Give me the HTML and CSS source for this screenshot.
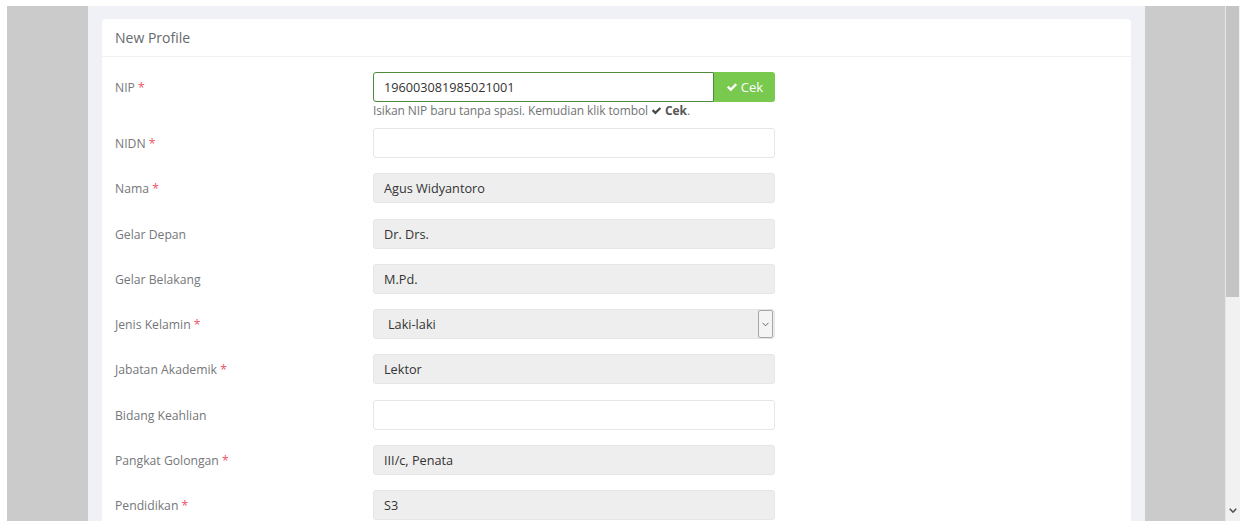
FILE: index.html
```html
<!DOCTYPE html>
<html lang="id">
<head>
<meta charset="utf-8">
<title>New Profile</title>
<link rel="stylesheet" href="styles.css">
</head>
<body>
<div class="viewport">
  <div class="stage">
    <div class="page">
      <div class="card">
        <div class="card-head">New Profile</div>
        <form class="card-body">
          <div class="row row-help">
            <label class="label">NIP <span class="req">*</span></label>
            <div class="field">
              <div class="input-group">
                <input class="input input-ok" type="text" value="196003081985021001">
                <button class="btn-cek" type="button"><svg class="check" viewBox="0 0 16 16" width="12" height="12"><path d="M1.2 8.6 L3.5 6.3 L6.4 9.2 L12.5 3.1 L14.8 5.4 L6.4 13.8 Z" fill="currentColor"/></svg>Cek</button>
              </div>
              <p class="help">Isikan NIP baru tanpa spasi. Kemudian klik tombol <svg class="check-sm" viewBox="0 0 16 16" width="11" height="11"><path d="M1.2 8.6 L3.5 6.3 L6.4 9.2 L12.5 3.1 L14.8 5.4 L6.4 13.8 Z" fill="currentColor"/></svg> <b>Cek</b>.</p>
            </div>
          </div>
          <div class="row">
            <label class="label">NIDN <span class="req">*</span></label>
            <input class="input" type="text" value="">
          </div>
          <div class="row">
            <label class="label">Nama <span class="req">*</span></label>
            <input class="input" type="text" value="Agus Widyantoro" readonly>
          </div>
          <div class="row">
            <label class="label">Gelar Depan</label>
            <input class="input" type="text" value="Dr. Drs." readonly>
          </div>
          <div class="row">
            <label class="label">Gelar Belakang</label>
            <input class="input" type="text" value="M.Pd." readonly>
          </div>
          <div class="row">
            <label class="label">Jenis Kelamin <span class="req">*</span></label>
            <div class="select">
              <span class="select-value">Laki-laki</span>
              <span class="select-arrow"><svg viewBox="0 0 8 5" width="7" height="5"><path d="M0.6 0.6 L4 4 L7.4 0.6" fill="none" stroke="#555" stroke-width="1"/></svg></span>
            </div>
          </div>
          <div class="row">
            <label class="label">Jabatan Akademik <span class="req">*</span></label>
            <input class="input" type="text" value="Lektor" readonly>
          </div>
          <div class="row">
            <label class="label">Bidang Keahlian</label>
            <input class="input" type="text" value="">
          </div>
          <div class="row">
            <label class="label">Pangkat Golongan <span class="req">*</span></label>
            <input class="input" type="text" value="III/c, Penata" readonly>
          </div>
          <div class="row">
            <label class="label">Pendidikan <span class="req">*</span></label>
            <input class="input" type="text" value="S3" readonly>
          </div>
        </form>
      </div>
    </div>
  </div>
  <div class="scrollbar">
    <div class="thumb"></div>
    <div class="track"></div>
    <div class="arrow"><svg viewBox="0 0 8 6" width="8" height="6"><path d="M0.8 0.8 L4 4.2 L7.2 0.8" fill="none" stroke="#505050" stroke-width="1.6"/></svg></div>
  </div>
</div>
</body>
</html>
```

FILE: styles.css
```css
html, body {
  margin: 0;
  padding: 0;
  background: #ffffff;
  font-family: "Open Sans", "Liberation Sans", sans-serif;
  overflow: hidden;
}

.viewport {
  margin: 6px 4px 0 7px;
  height: 515px;
  display: flex;
  overflow: hidden;
}

.stage {
  flex: 1;
  background: #cbcbcb;
  padding-left: 81px;
  overflow: hidden;
}

.page {
  width: 1057px;
  height: 100%;
  background: #f0f1f6;
  padding: 13px 14px 0;
  box-sizing: border-box;
}

.card {
  background: #ffffff;
  border-radius: 4px 4px 0 0;
}

.card-head {
  height: 37px;
  line-height: 38px;
  padding: 0 13px;
  font-size: 14px;
  color: #676a6c;
  border-bottom: 1px solid #f2f2f4;
}

.card-body {
  margin: 0;
  padding: 15px 13px 20px;
}

.row {
  display: grid;
  grid-template-columns: 258px 402px;
  align-items: start;
  margin-bottom: 15.25px;
}

.row-help {
  margin-bottom: 10px;
}

.label {
  font-size: 12.2px;
  line-height: 29px;
  padding-top: 1px;
  color: #75777a;
}

.req {
  color: #ed5565;
}

.input {
  display: block;
  width: 100%;
  height: 30px;
  box-sizing: border-box;
  padding: 0 10px;
  border: 1px solid #e5e6e7;
  border-radius: 3px;
  background: #ffffff;
  font-family: "Open Sans", "Liberation Sans", sans-serif;
  font-size: 12.7px;
  color: #333333;
  outline: none;
}

.input[readonly] {
  background: #eeeeee;
}

.input-group {
  display: flex;
}

.input-ok {
  flex: 1;
  border-color: #4d8a3e;
  border-radius: 3px 0 0 3px;
}

.btn-cek {
  width: 61px;
  height: 30px;
  border: none;
  border-radius: 0 3px 3px 0;
  background: #79c94f;
  color: #ffffff;
  font-family: "Open Sans", "Liberation Sans", sans-serif;
  font-size: 13px;
  display: flex;
  align-items: center;
  justify-content: center;
  gap: 3px;
  padding: 0;
}

.check-sm {
  color: #4a4a4a;
  vertical-align: -1px;
}

.help {
  margin: 1px 0 0;
  font-size: 12px;
  letter-spacing: -0.1px;
  line-height: 15px;
  color: #737373;
}

.help b {
  color: #555555;
}

.select {
  height: 30px;
  box-sizing: border-box;
  border: 1px solid #e5e6e7;
  border-radius: 3px;
  background: #eeeeee;
  display: flex;
  align-items: center;
  justify-content: space-between;
  padding: 0 1px 0 14px;
  font-size: 12.7px;
  color: #333333;
}

.select-arrow {
  width: 13px;
  height: 26px;
  border: 1px solid #a6a6a6;
  border-radius: 2px;
  background: #f4f4f4;
  display: flex;
  align-items: center;
  justify-content: center;
}

.scrollbar {
  width: 14px;
  border-left: 1px solid #e6e6e6;
  display: flex;
  flex-direction: column;
  background: #f1f1f1;
}

.thumb {
  height: 291px;
  margin-right: 1px;
  background: #c4c4c4;
}

.track {
  flex: 1;
}

.arrow {
  height: 13px;
  display: flex;
  align-items: flex-start;
  justify-content: center;
}
```
